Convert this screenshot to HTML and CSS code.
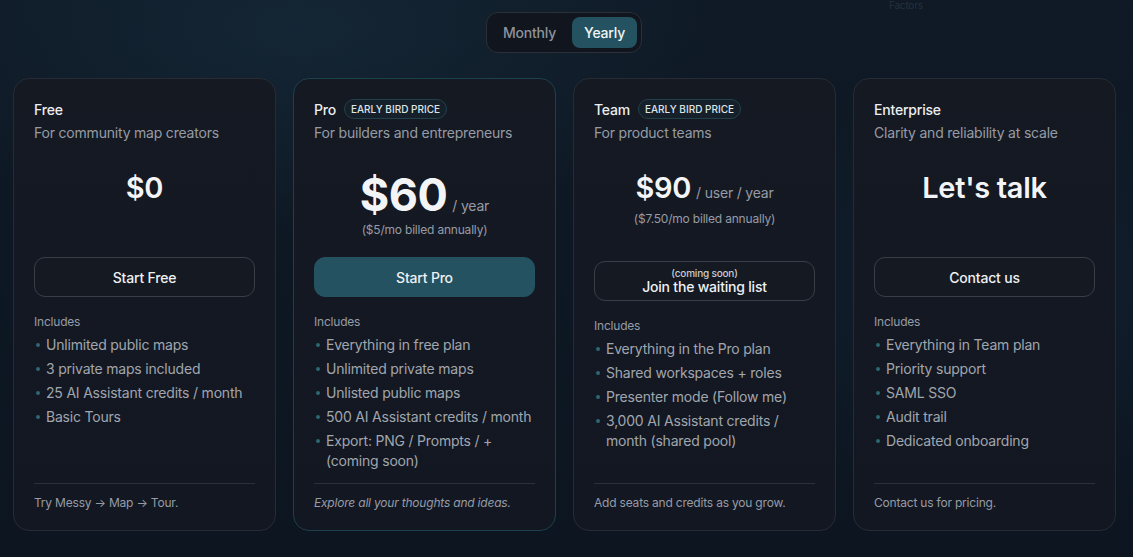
FILE: index.html
```html
<!DOCTYPE html>
<html lang="en">
<head>
<meta charset="utf-8">
<title>Pricing</title>
<link rel="stylesheet" href="styles.css">
</head>
<body>
<div class="page">
  <div class="ghost">Factors</div>
  <div class="toggle">
    <button class="toggle-btn">Monthly</button>
    <button class="toggle-btn active">Yearly</button>
  </div>
  <div class="plans">
    <div class="card">
      <div class="title-row"><span class="plan-name">Free</span></div>
      <div class="plan-sub">For community map creators</div>
      <div class="price-area">
        <div class="price-line"><span class="amount">$0</span></div>
      </div>
      <button class="cta">Start Free</button>
      <div class="includes">Includes</div>
      <ul class="features">
        <li>Unlimited public maps</li>
        <li>3 private maps included</li>
        <li>25 AI Assistant credits / month</li>
        <li>Basic Tours</li>
      </ul>
      <div class="card-foot">Try Messy → Map → Tour.</div>
    </div>

    <div class="card featured">
      <div class="title-row"><span class="plan-name">Pro</span><span class="badge">EARLY BIRD PRICE</span></div>
      <div class="plan-sub">For builders and entrepreneurs</div>
      <div class="price-area">
        <div class="price-line"><span class="amount big">$60</span><span class="per">/ year</span></div>
        <div class="billed">($5/mo billed annually)</div>
      </div>
      <button class="cta primary">Start Pro</button>
      <div class="includes">Includes</div>
      <ul class="features">
        <li>Everything in free plan</li>
        <li>Unlimited private maps</li>
        <li>Unlisted public maps</li>
        <li>500 AI Assistant credits / month</li>
        <li>Export: PNG / Prompts / + (coming soon)</li>
      </ul>
      <div class="card-foot italic">Explore all your thoughts and ideas.</div>
    </div>

    <div class="card">
      <div class="title-row"><span class="plan-name">Team</span><span class="badge">EARLY BIRD PRICE</span></div>
      <div class="plan-sub">For product teams</div>
      <div class="price-area tall">
        <div class="price-line"><span class="amount">$90</span><span class="per">/ user / year</span></div>
        <div class="billed">($7.50/mo billed annually)</div>
      </div>
      <button class="cta stacked"><span class="soon">(coming soon)</span><span>Join the waiting list</span></button>
      <div class="includes">Includes</div>
      <ul class="features">
        <li>Everything in the Pro plan</li>
        <li>Shared workspaces + roles</li>
        <li>Presenter mode (Follow me)</li>
        <li>3,000 AI Assistant credits / month (shared pool)</li>
      </ul>
      <div class="card-foot">Add seats and credits as you grow.</div>
    </div>

    <div class="card">
      <div class="title-row"><span class="plan-name">Enterprise</span></div>
      <div class="plan-sub">Clarity and reliability at scale</div>
      <div class="price-area">
        <div class="price-line"><span class="amount">Let's talk</span></div>
      </div>
      <button class="cta">Contact us</button>
      <div class="includes">Includes</div>
      <ul class="features">
        <li>Everything in Team plan</li>
        <li>Priority support</li>
        <li>SAML SSO</li>
        <li>Audit trail</li>
        <li>Dedicated onboarding</li>
      </ul>
      <div class="card-foot">Contact us for pricing.</div>
    </div>
  </div>
</div>
</body>
</html>
```

FILE: styles.css
```css
* { box-sizing: border-box; }
html, body { margin: 0; padding: 0; }
body {
  width: 1133px;
  height: 557px;
  overflow: hidden;
  font-family: Inter, "Noto Sans", sans-serif;
  letter-spacing: -0.2px;
  color: #eef0f3;
  background:
    radial-gradient(ellipse 600px 300px at 300px 30px, rgba(30, 60, 80, 0.35), transparent 70%),
    radial-gradient(ellipse 500px 300px at 1000px 300px, rgba(25, 50, 75, 0.25), transparent 70%),
    linear-gradient(180deg, #0f1a26 0%, #0c1520 100%);
}
.page {
  position: relative;
  display: flex;
  flex-direction: column;
  align-items: center;
  padding-top: 12px;
}
.ghost {
  position: absolute;
  left: 889px;
  top: 0;
  font-size: 10px;
  line-height: 11px;
  color: #27303b;
}
.toggle {
  display: flex;
  gap: 4px;
  padding: 4px;
  margin-right: 5px;
  background: #11151d;
  border: 1px solid #2a2f39;
  border-radius: 12px;
}
.toggle-btn {
  font-family: inherit;
  font-size: 14px;
  font-weight: 500;
  letter-spacing: -0.2px;
  border: none;
  background: transparent;
  color: #8d939d;
  height: 31px;
  padding: 0 12px;
  border-radius: 8px;
}
.toggle-btn.active {
  background: #245260;
  color: #f1f4f6;
}
.plans {
  margin-top: 25px;
  display: grid;
  grid-template-columns: repeat(4, 263px);
  gap: 17px;
  align-self: flex-start;
  margin-left: 13px;
}
.card {
  height: 453px;
  display: flex;
  flex-direction: column;
  padding: 20px 20px 0 20px;
  background: linear-gradient(180deg, #151922 0%, #131722 100%);
  border: 1px solid #262b35;
  border-radius: 16px;
}
.card > * { flex-shrink: 0; }
.card.featured { border-color: #1c404c; }
.title-row {
  display: flex;
  align-items: center;
  gap: 8px;
  height: 20px;
}
.plan-name {
  font-size: 14px;
  font-weight: 500;
  color: #eceef1;
}
.badge {
  font-size: 10px;
  font-weight: 500;
  letter-spacing: 0;
  color: #dfe4e8;
  background: #15202a;
  border: 1px solid #22404b;
  border-radius: 10px;
  height: 20px;
  line-height: 18px;
  padding: 0 6px;
}
.plan-sub {
  margin-top: 4px;
  font-size: 14px;
  line-height: 20px;
  color: #969ca6;
}
.price-area {
  height: 114px;
  display: flex;
  flex-direction: column;
  align-items: center;
  padding-top: 27px;
}
.price-area.tall { height: 118px; }
.price-line {
  display: flex;
  align-items: baseline;
  gap: 5px;
}
.amount {
  font-size: 29px;
  font-weight: 600;
  line-height: 36px;
  letter-spacing: -0.3px;
  color: #f3f4f6;
}
.amount.big {
  font-size: 45px;
  font-weight: 700;
  line-height: 50px;
  letter-spacing: -0.5px;
}
.per {
  font-size: 14px;
  color: #969ca6;
}
.billed {
  font-size: 12px;
  line-height: 15px;
  color: #969ca6;
  margin-top: 5px;
}
.card.featured .billed { margin-top: 2px; }
.cta {
  font-family: inherit;
  letter-spacing: -0.2px;
  height: 40px;
  border-radius: 11px;
  border: 1px solid #383d48;
  background: #141922;
  color: #eef0f3;
  font-size: 14px;
  font-weight: 500;
  cursor: pointer;
}
.cta.primary {
  background: #245260;
  border-color: #245260;
}
.cta.stacked {
  display: flex;
  flex-direction: column;
  align-items: center;
  justify-content: center;
  line-height: 16px;
  height: 40px;
}
.soon {
  font-size: 10px;
  line-height: 11px;
  color: #c9cdd3;
}
.includes {
  margin-top: 17px;
  font-size: 12px;
  line-height: 16px;
  color: #969ca6;
}
.features {
  list-style: none;
  margin: 3px 0 0 0;
  padding: 0;
}
.features li {
  position: relative;
  padding: 2px 0 2px 12px;
  font-size: 14px;
  line-height: 20px;
  color: #a0a6ae;
}
.features li::before {
  content: "";
  position: absolute;
  left: 2px;
  top: 10px;
  width: 4px;
  height: 4px;
  border-radius: 50%;
  background: #2d6674;
}
.card-foot {
  margin-top: auto;
  margin-bottom: 19px;
  padding-top: 11px;
  border-top: 1px solid #2a2f39;
  font-size: 12px;
  line-height: 16px;
  color: #969ca6;
  height: 28px;
}
.card-foot.italic { font-style: italic; }
```
